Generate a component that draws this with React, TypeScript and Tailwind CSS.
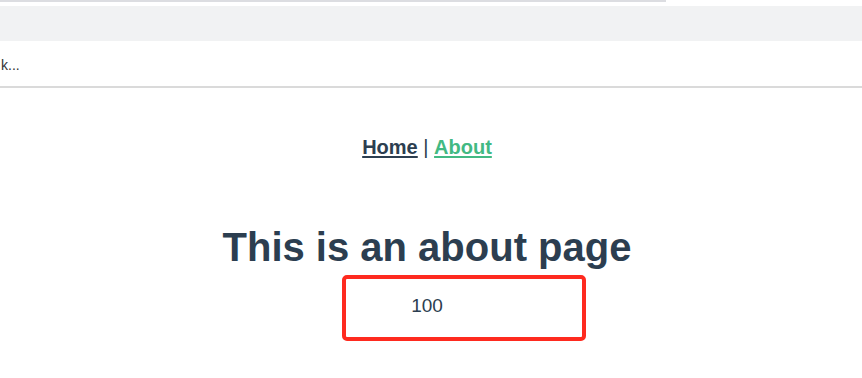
import React from 'react';

const App: React.FC = () => {
    return (
        <div className="relative w-[862px] h-[378px] bg-white overflow-hidden font-['Liberation_Sans',Arial,sans-serif]">
            {/* browser strip */}
            <div className="w-[666px] h-[2px] bg-[#dcdde1]" />
            <div className="h-[4px]" />
            <div className="h-[35px] bg-[#f1f2f3]" />
            <div className="h-[45px] flex items-center">
                <span className="text-[14px] leading-[16px] text-[#333] pl-[1px] mt-[3px]">k...</span>
            </div>
            <div className="h-[2px] bg-[#dadada]" />

            {/* page */}
            <div className="w-[854px] text-center text-[#2c3e50]">
                <nav className="pt-[48px] text-[20px] leading-[23px] font-bold">
                    <a href="#" className="underline underline-offset-[2px] decoration-2 text-[#2c3e50]">Home</a>
                    <span className="font-normal"> | </span>
                    <a href="#" className="underline underline-offset-[2px] decoration-2 text-[#42b983]">About</a>
                </nav>
                <h1 className="mt-[65px] text-[40px] leading-[46px] font-bold">This is an about page</h1>
                <div className="mt-[25px] text-[19px] leading-[22px] text-[#2c3e50]">100</div>
            </div>

            {/* red annotation box */}
            <div className="absolute left-[342px] top-[275px] w-[244px] h-[66px] border-4 border-[#fe2a1f] rounded-[5px]" />
        </div>
    );
};

export default App;
